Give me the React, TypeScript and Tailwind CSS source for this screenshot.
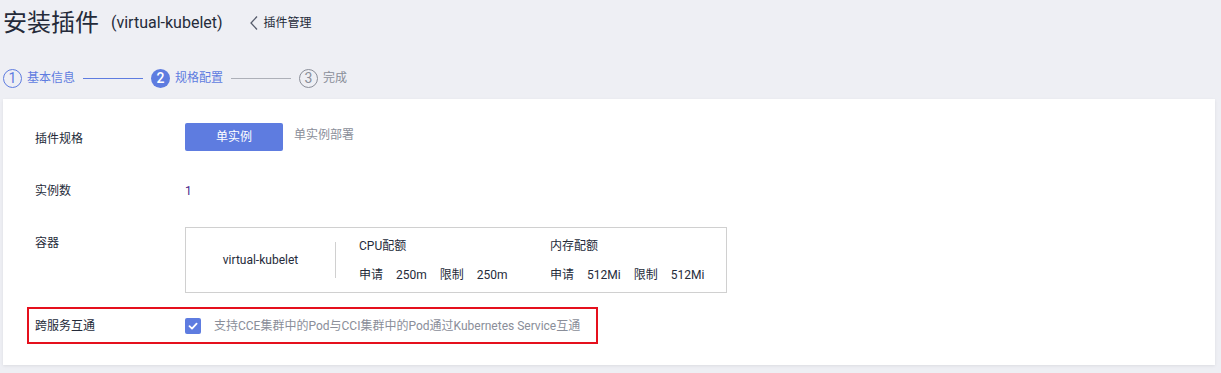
import React from "react";

const font = { fontFamily: "Roboto, 'Noto Sans CJK SC', sans-serif" };

function Check() {
  return (
    <div className="w-4 h-4 rounded-[2px] bg-[#5e7ce0] flex items-center justify-center">
      <svg width="12" height="12" viewBox="0 0 12 12" fill="none">
        <path d="M2.5 6.2 L5 8.6 L9.6 3.6" stroke="white" strokeWidth="1.8" strokeLinecap="round" strokeLinejoin="round" />
      </svg>
    </div>
  );
}

export default function App() {
  return (
    <div className="w-[1221px] h-[373px] bg-[#eeeff4] text-[#252b3a] overflow-hidden" style={font}>
      {/* Header */}
      <div className="h-[45px] flex items-center pl-[3px]">
        <span className="text-[24px] leading-none text-[#252b3a]">安装插件</span>
        <span className="ml-[12px] text-[16px] text-[#252b3a]">(virtual-kubelet)</span>
        <span className="ml-[26px] flex items-center text-[12px] text-[#252b3a]">
          <svg width="10" height="16" viewBox="0 0 10 16" fill="none" className="mr-[5px]">
            <path d="M8 1.5 L2 8 L8 14.5" stroke="#575d6c" strokeWidth="1.3" />
          </svg>
          插件管理
        </span>
      </div>
      {/* Steps */}
      <div className="h-[20px] mt-[23px] flex items-center pl-[3px] text-[12px]">
        <div className="w-[19px] h-[19px] rounded-full border border-[#5e7ce0] text-[#5e7ce0] flex items-center justify-center text-[14px]">1</div>
        <span className="ml-[5px] text-[#5e7ce0]">基本信息</span>
        <div className="ml-[8px] w-[60px] h-px bg-[#5e7ce0]" />
        <div className="ml-[8px] w-[19px] h-[19px] rounded-full bg-[#5e7ce0] text-white flex items-center justify-center text-[14px] font-medium">2</div>
        <span className="ml-[5px] text-[#5e7ce0]">规格配置</span>
        <div className="ml-[8px] w-[60px] h-px bg-[#adb0b8]" />
        <div className="ml-[8px] w-[19px] h-[19px] rounded-full border border-[#8a8e99] text-[#8a8e99] flex items-center justify-center text-[14px]">3</div>
        <span className="ml-[5px] text-[#8a8e99]">完成</span>
      </div>
      {/* Card */}
      <div className="mt-[11px] ml-[3px] w-[1212px] h-[266px] bg-white shadow-[0_1px_3px_rgba(0,0,0,0.08)] pt-[24px] text-[12px]">
        {/* Row 1 */}
        <div className="flex items-center h-[28px] pl-[32px]">
          <div className="w-[150px] pt-[4px]">插件规格</div>
          <div className="w-[98px] h-[28px] rounded-[2px] bg-[#5e7ce0] text-white flex items-center justify-center">单实例</div>
          <div className="ml-[11px] text-[#8a8e99] -mt-[4px]">单实例部署</div>
        </div>
        {/* Row 2 */}
        <div className="flex items-center h-[20px] mt-[30px] pl-[32px]">
          <div className="w-[150px]">实例数</div>
          <div className="text-[#4b1e8a]">1</div>
        </div>
        {/* Row 3 */}
        <div className="flex mt-[26px] pl-[32px]">
          <div className="w-[150px] pt-[7px]">容器</div>
          <div className="w-[542px] h-[66px] border border-[#d0d0d0] flex items-center">
            <div className="w-[150px] h-[36px] flex items-center justify-center border-r border-[#d0d0d0]">virtual-kubelet</div>
            <div className="ml-[23px] w-[191px] flex flex-col gap-[11px]">
              <div>CPU配额</div>
              <div className="flex">
                <span>申请</span><span className="ml-[13px]">250m</span>
                <span className="ml-[13px]">限制</span><span className="ml-[13px]">250m</span>
              </div>
            </div>
            <div className="flex flex-col gap-[11px]">
              <div>内存配额</div>
              <div className="flex">
                <span>申请</span><span className="ml-[13px]">512Mi</span>
                <span className="ml-[13px]">限制</span><span className="ml-[13px]">512Mi</span>
              </div>
            </div>
          </div>
        </div>
        {/* Row 4 */}
        <div className="mt-[14px] ml-[24px] w-[571px] h-[37px] border-2 border-[#e5101d] flex items-center pl-[6px]">
          <div className="w-[150px]">跨服务互通</div>
          <Check />
          <div className="ml-[13px] text-[#8a8e99]">支持CCE集群中的Pod与CCI集群中的Pod通过Kubernetes Service互通</div>
        </div>
      </div>
    </div>
  );
}
